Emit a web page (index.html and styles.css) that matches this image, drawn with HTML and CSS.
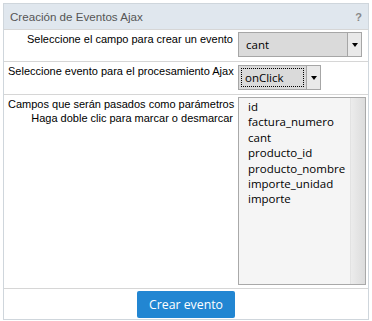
FILE: index.html
```html
<!DOCTYPE html>
<html lang="es">
<head>
  <meta charset="UTF-8">
  <title>Creación de Eventos Ajax</title>
  <link rel="stylesheet" href="styles.css">
</head>
<body>

  <div class="panel">
    <!-- HEADER -->
    <div class="panel-head">
      <span>Creación de Eventos Ajax</span>
      <span class="help">?</span>
    </div>

    <!-- Campo -->
    <div class="row">
      <div class="label right">Seleccione el campo para crear un evento</div>
      <div class="field">
        <div class="select select-wide">
          <span class="select-text">cant</span>
          <span class="select-arrow"></span>
        </div>
      </div>
    </div>

    <!-- Evento -->
    <div class="row row-event">
      <div class="label">Seleccione evento para el procesamiento Ajax</div>
      <div class="field">
        <div class="select select-small">
          <span class="select-text focused">onClick</span>
          <span class="select-arrow"></span>
        </div>
      </div>
    </div>

    <!-- Parametros -->
    <div class="row row-params">
      <div class="label right">
        Campos que serán pasados como parámetros<br>
        Haga doble clic para marcar o desmarcar
      </div>
      <div class="field">
        <div class="listbox">
          <div class="options">
            <div>id</div>
            <div>factura_numero</div>
            <div>cant</div>
            <div>producto_id</div>
            <div>producto_nombre</div>
            <div>importe_unidad</div>
            <div>importe</div>
          </div>
          <div class="scroll-track"></div>
        </div>
      </div>
    </div>

    <!-- Boton -->
    <div class="panel-foot">
      <button class="create-btn">Crear evento</button>
    </div>
  </div>

</body>
</html>
```

FILE: styles.css
```css
body {
  margin: 0;
  padding: 3px;
  background-color: white;
  font-family: "Liberation Sans", Arial, sans-serif;
  font-size: 11px;
  color: #000;
}

.panel {
  width: 364px;
  border: 1px solid #cfd6dc;
}

.panel-head {
  display: flex;
  justify-content: space-between;
  align-items: center;
  height: 25px;
  padding: 0 6px;
  background-color: #e0e7ee;
  color: #555;
  font-size: 11.6px;
}

.help {
  color: #888;
  font-weight: bold;
  font-size: 11px;
}

.row {
  display: grid;
  grid-template-columns: 231px 1fr;
  border-top: 1px solid #d6d6d6;
}

.label {
  padding: 2px 2px 0 4px;
  line-height: 14px;
  white-space: nowrap;
}

.label.right {
  text-align: right;
}

.field {
  padding: 2px 3px 4px 3px;
}

.select {
  display: flex;
  height: 23px;
  border: 1px solid #a6a6a6;
  background-color: #dadada;
  font-family: "Open Sans", sans-serif;
  font-size: 11.5px;
}

.select-wide {
  width: 122px;
}

.select-small {
  width: 81px;
}

.select-text {
  flex: 1;
  padding-left: 7px;
  line-height: 23px;
}

.select-small .select-text {
  margin: 2px;
  padding-left: 3px;
  line-height: 17px;
}

.focused {
  border: 1px dotted #000;
}

.select-arrow {
  position: relative;
  width: 13px;
  border-left: 1px solid #a6a6a6;
  background-color: #e9e9e9;
}

.select-arrow::after {
  content: "";
  position: absolute;
  left: 4px;
  top: 10px;
  border-left: 3px solid transparent;
  border-right: 3px solid transparent;
  border-top: 4px solid #000;
}

.row-event .field {
  padding-top: 3px;
}

.row-params .field {
  padding: 2px 2px 3px 3px;
}

.listbox {
  display: flex;
  height: 186px;
  border: 1px solid #a9a9a9;
  background-color: #f5f5f5;
}

.options {
  flex: 1;
  padding: 1px 0 0 9px;
  font-family: "Open Sans", sans-serif;
  font-size: 11.5px;
  line-height: 15.4px;
}

.scroll-track {
  width: 14px;
  border-left: 1px solid #e2e2e2;
  background: linear-gradient(90deg, #ececec, #dcdcdc);
}

.panel-foot {
  display: flex;
  justify-content: center;
  padding: 2px 0 0;
  height: 28px;
  border-top: 1px solid #d6d6d6;
}

.create-btn {
  width: 98px;
  height: 27px;
  padding: 0;
  background-color: #2286d2;
  color: white;
  border: none;
  border-radius: 2px;
  font-family: "Open Sans", sans-serif;
  font-size: 12.3px;
}
```
